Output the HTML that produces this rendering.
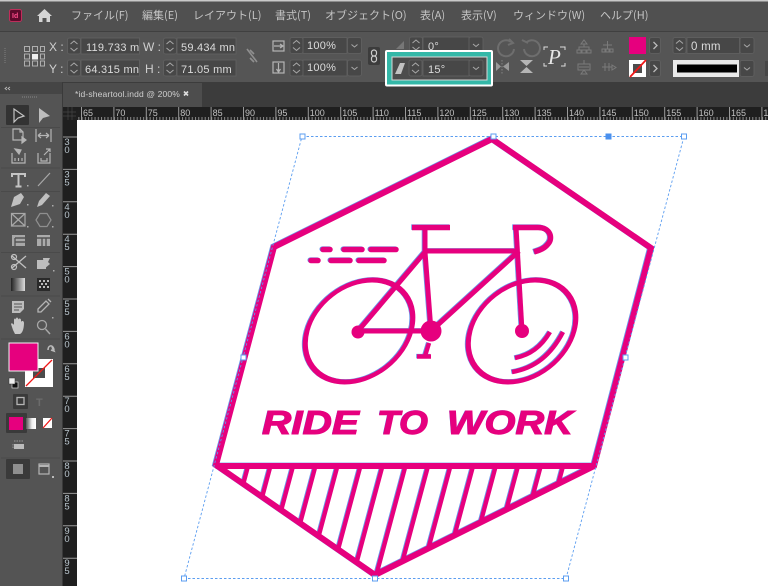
<!DOCTYPE html>
<html><head><meta charset="utf-8"><title>InDesign</title>
<style>html,body{margin:0;padding:0;background:#535353}svg{display:block}
text{font-family:"Liberation Sans","Noto Sans CJK JP",sans-serif}
.m{font-size:11px;fill:#c4c4c4;font-family:"Noto Sans CJK JP","Liberation Sans",sans-serif}
.l{font-size:12px;fill:#cfcfcf}
.v{font-size:11px;fill:#dcdcdc;letter-spacing:.25px}
.r{font-size:9px;fill:#c0c0c0}
.rv{font-size:9.5px;fill:#b8c4cc;text-anchor:middle}
.f{fill:#474747;stroke:#5e5e5e;stroke-width:1}
.ic{fill:none;stroke:#b5b5b5;stroke-width:1.2}
.ch{fill:none;stroke:#a8a8a8;stroke-width:1}
</style></head><body>
<svg width="768" height="586" viewBox="0 0 768 586" xmlns="http://www.w3.org/2000/svg">
<defs>
<pattern id="tk" x="81.6" y="0" width="3.24" height="20" patternUnits="userSpaceOnUse"><rect x="0" y="17" width="1" height="3" fill="#8a8a8a"/></pattern>
<pattern id="tkv" x="0" y="137" width="20" height="3.24" patternUnits="userSpaceOnUse"><rect x="17" y="0" width="3" height="1" fill="#8a8a8a"/></pattern>
<clipPath id="v"><polygon points="216,465 594,465 375,575"/></clipPath>
<linearGradient id="gr"><stop offset="0" stop-color="#222"/><stop offset="1" stop-color="#ddd"/></linearGradient>
<linearGradient id="g2"><stop offset="0" stop-color="#555"/><stop offset=".6" stop-color="#eee"/><stop offset="1" stop-color="#fff"/></linearGradient>
<g id="art" fill="none" stroke-linecap="butt">
 <polygon points="492,139 651,248 594,466 375,575 216,465 274,247" stroke-width="6" stroke-linejoin="miter"/>
 <path d="M216 466H594" stroke-width="6"/>
 <g clip-path="url(#v)" stroke-width="4.4">
  <path d="M248.300 465L217.500 580M270.700 465L239.900 580M293.300 465L262.500 580M315.700 465L284.900 580M337.700 465L306.900 580M360.700 465L329.900 580M382.700 465L351.900 580M405.700 465L374.900 580M428.300 465L397.500 580M450.700 465L419.900 580M473.300 465L442.500 580M496 465L465.200 580M518.300 465L487.500 580M541 465L510.200 580M563.300 465L532.500 580"/>
 </g>
 <g stroke-width="5">
  <ellipse cx="0" cy="0" rx="52" ry="51" transform="matrix(1,0,-.268,1,359,331)"/>
  <ellipse cx="0" cy="0" rx="52" ry="51" transform="matrix(1,0,-.268,1,522,331)"/>
  <path d="M358 331L425 252M358 331H431M425 227L425 252L431 331M423 251H519M519 251L431 331"/>
  <path d="M516 227L522 331"/>
  <path d="M412 227.500H450" stroke-width="5.500"/>
  <path d="M513 227.500H538C551 227.500 553 239 548 244C544 249 540 250 534 252" stroke-width="5.500"/>
  <path d="M429 343L425 356M417 356.500H431" stroke-width="4.500"/>
  <path d="M550 332C541 347 530 355 515 358" stroke-width="4.500"/>
  <path d="M563 332C551 355 535 368 512 372" stroke-width="4.500"/>
 </g>
 <path d="M323 249.500H330M344 249.500H362M371 249.500H396M311 260.500H318M331 260.500H350M359 260.500H384" stroke-width="5.500" stroke-linecap="round"/>
</g>
<g id="hubs"><circle cx="358" cy="332" r="6.500"/><circle cx="522" cy="331" r="7"/><circle cx="431" cy="331" r="10.500"/></g>
<g id="spin"><rect class="f" x="0" y="0" width="13" height="16" rx="2"/><path class="ch" d="M3 6L6.500 3L10 6M3 10L6.500 13L10 10"/></g>
<g id="dd"><rect class="f" x="0" y="0" width="14" height="16" rx="2"/><path class="ch" d="M4 7L7 9.500L10 7"/></g>
</defs>

<!-- chrome -->
<rect width="768" height="586" fill="#535353"/>
<rect width="768" height="1.500" fill="#c9c9c9"/>
<rect y="1.500" width="768" height="30" fill="#505050"/>
<rect y="31" width="768" height="1" fill="#404040"/>
<rect y="32" width="768" height="50" fill="#555555"/>
<rect y="82" width="768" height="25" fill="#3c3c3c"/>
<rect x="0" y="82" width="62" height="12" fill="#454545"/>
<rect x="0" y="94" width="62" height="492" fill="#545454"/>
<rect x="62" y="82" width="1" height="504" fill="#3a3a3a"/>
<rect x="63" y="83" width="139" height="24" fill="#4d4d4d"/>

<!-- menu -->
<rect x="10" y="10" width="11" height="11" rx="1.500" fill="#5e0a2c"/>
<rect x="9.500" y="9.500" width="12" height="12" rx="2" fill="none" stroke="#e0245e" stroke-width=".8"/>
<text x="12" y="18" font-size="7" font-weight="bold" fill="#ff4d8d">Id</text>
<path d="M37 16L44.500 9L52 16H50V22H46.500V18H42.500V22H39V16Z" fill="#d4d4d4"/>
<text class="m" x="71" y="19">ファイル(F)</text>
<text class="m" x="142" y="19">編集(E)</text>
<text class="m" x="193" y="19">レイアウト(L)</text>
<text class="m" x="275" y="19">書式(T)</text>
<text class="m" x="325" y="19">オブジェクト(O)</text>
<text class="m" x="420" y="19">表(A)</text>
<text class="m" x="461" y="19">表示(V)</text>
<text class="m" x="513" y="19">ウィンドウ(W)</text>
<text class="m" x="600" y="19">ヘルプ(H)</text>

<!-- control bar -->
<path d="M5 48V64" stroke="#6a6a6a" stroke-width="2" stroke-dasharray="1 1"/>
<g fill="none" stroke="#b8b8b8" stroke-width=".9">
<rect x="24.500" y="46.500" width="5" height="5"/><rect x="32.500" y="46.500" width="5" height="5"/><rect x="40.500" y="46.500" width="4" height="5"/>
<rect x="24.500" y="54" width="5" height="5"/><rect x="40.500" y="54" width="4" height="5"/>
<rect x="24.500" y="61" width="5" height="5"/><rect x="32.500" y="61" width="5" height="5"/><rect x="40.500" y="61" width="4" height="5"/>
</g>
<rect x="32" y="54" width="6" height="5.500" fill="#eee"/>
<text class="l" x="49" y="51">X :</text><text class="l" x="49" y="73">Y :</text>
<text class="l" x="143" y="51">W :</text><text class="l" x="145" y="73">H :</text>
<use href="#spin" x="67.500" y="38"/><rect class="f" x="81" y="38" width="58.500" height="16"/>
<use href="#spin" x="67.500" y="60"/><rect class="f" x="81" y="60" width="58.500" height="16"/>
<use href="#spin" x="163.500" y="38"/><rect class="f" x="177" y="38" width="59" height="16"/>
<use href="#spin" x="163.500" y="60"/><rect class="f" x="177" y="60" width="59" height="16"/>
<text class="v" x="86" y="51">119.733 m</text><text class="v" x="85" y="73">64.315 mn</text>
<text class="v" x="181" y="51">59.434 mn</text><text class="v" x="181" y="73">71.05 mm</text>
<path d="M247 49L257 62M250 50L254 54M250 58L254 62" fill="none" stroke="#8f8f8f" stroke-width="1.600"/>
<rect class="ic" x="273" y="41" width="11" height="10"/><path class="ic" d="M274 46H282M280 44L283 46L280 48"/>
<rect class="ic" x="273" y="62" width="11" height="11"/><path class="ic" d="M278.500 63V71M276.500 69L278.500 72L280.500 69"/>
<use href="#spin" x="290" y="37.500"/><rect class="f" x="303" y="37.500" width="44" height="16"/><use href="#dd" x="347.500" y="37.500"/>
<use href="#spin" x="290" y="60"/><rect class="f" x="303" y="60" width="44" height="16"/><use href="#dd" x="347.500" y="60"/>
<text class="v" x="307" y="49">100%</text><text class="v" x="307" y="71">100%</text>
<rect x="368" y="47" width="12" height="18" rx="2" fill="#3c3c3c"/><rect x="371.500" y="50" width="5" height="6" rx="2.500" fill="none" stroke="#ccc" stroke-width="1.200"/><rect x="371.500" y="56" width="5" height="6" rx="2.500" fill="none" stroke="#ccc" stroke-width="1.200"/>

<path d="M396 49L404 41V49Z" fill="#777"/>
<use href="#spin" x="409.500" y="37"/><rect class="f" x="423" y="37" width="46" height="16"/><use href="#dd" x="469" y="37"/>
<text class="v" x="428" y="50">0°</text>

<path style="stroke:#6e6e6e;stroke-width:2;fill:none" d="M511 42A8 8 0 1 0 514 49M509 39L513 43L508 45"/>
<path style="stroke:#6e6e6e;stroke-width:2;fill:none" d="M527 42A8 8 0 1 1 524 49M522 40L528 43"/>
<path d="M496 62L501 66.500L496 71ZM509 62V71L503 66.500Z" fill="#999"/><path d="M502 60V74" stroke="#999" stroke-width=".7" stroke-dasharray="1.500 1.500"/>
<path d="M520 60H533L526.500 66ZM520 73H533L526.500 67Z" fill="#b5b5b5"/>

<text x="548" y="64" font-size="21" font-style="italic" style="font-family:'Liberation Serif',serif" fill="#e6e6e6">P</text>
<path d="M544 50V47H548M560 47H565V50M544 63V66H547M561 66H565V63" fill="none" stroke="#ddd" stroke-width="1"/>
<g fill="none" stroke="#7a7a7a" stroke-width="1">
<path d="M584 40L587 44H581ZM584 44V47M579 50V47H589V50M577 50H581V53H577ZM582 50H586V53H582ZM587 50H591V53H587Z"/>
<path d="M603 45H612M607.500 41V49M602 49H605V52H602ZM606 49H609V52H606ZM610 49H613V52H610Z"/>
<path d="M584 60V64M579 67H589M578 64H590V70H578ZM584 70L587 74H581Z"/>
<path d="M602 67H612M605 63V71M609 63V71M612 65L616 67.500L612 70Z"/>
</g>
<rect x="629" y="37" width="17" height="17" fill="#e6007e"/>
<rect class="f" x="649.500" y="37.500" width="11" height="16" rx="2"/><path d="M653.500 42L657 45.500L653.500 49" fill="none" stroke="#bbb" stroke-width="1.300"/>
<rect x="629" y="60" width="17" height="17" fill="#fff"/><rect x="633" y="64" width="9" height="9" fill="#4d4d4d"/>
<path d="M630 77L646 60" stroke="#f01818" stroke-width="1.800"/>
<rect class="f" x="649.500" y="60.500" width="11" height="16" rx="2"/><path d="M653.500 65L657 68.500L653.500 72" fill="none" stroke="#bbb" stroke-width="1.300"/>
<use href="#spin" x="673" y="37.500"/><rect class="f" x="687" y="37.500" width="52.500" height="16"/><use href="#dd" x="740" y="37.500"/>
<text class="v" x="691" y="50" style="font-size:11.500px">0 mm</text>
<rect x="673" y="60" width="66" height="17" fill="#e9e9e9"/><rect x="677" y="64.500" width="60" height="8" fill="#000"/>
<use href="#dd" x="740" y="60.500"/>
<rect x="765" y="61" width="3" height="15" fill="#474747"/>

<!-- highlight -->
<rect x="385" y="50" width="108" height="36.500" rx="2" fill="#fff"/>
<rect x="387" y="52" width="104" height="32.500" fill="#34b8a8"/>
<rect x="391.500" y="56.500" width="96" height="24" fill="#d8d8d8"/>
<rect x="392.500" y="57.500" width="94" height="22" fill="#4c4c4c"/>
<path d="M395 74L400 63H405L401 74Z" fill="#c2c2c2"/>
<use href="#spin" x="409" y="60"/>
<rect class="f" x="423" y="60" width="46" height="16"/><use href="#dd" x="469" y="60"/>
<text class="v" x="428" y="73">15°</text>

<!-- tab -->
<path d="M7 87L5 88.500L7 90M10 87L8 88.500L10 90" fill="none" stroke="#bbb" stroke-width=".8"/>
<text x="75" y="97" font-size="8.500" fill="#cfcfcf" letter-spacing=".15">*id-sheartool.indd @ 200%</text>
<path d="M184 91.500L188 95.500M188 91.500L184 95.500" stroke="#dedede" stroke-width="1.600"/>

<!-- rulers -->
<rect x="63" y="107" width="705" height="13" fill="#1f1f1f"/>
<rect x="63" y="107" width="705" height="13" fill="url(#tk)"/>
<rect x="63" y="107" width="14" height="479" fill="#1f1f1f"/>
<rect x="63" y="120" width="14" height="466" fill="url(#tkv)"/>
<path d="M63 112H76M63 116H76M68 107V120M72 107V120" stroke="#454545" stroke-width=".7"/>
<rect x="77" y="120" width="691" height="466" fill="#fff"/>
<g stroke="#9a9a9a" stroke-width="1" fill="none"><path d="M81.500 107V120M113.900 107V120M146.300 107V120M178.700 107V120M211.100 107V120M243.500 107V120M275.900 107V120M308.300 107V120M340.700 107V120M373.100 107V120M405.500 107V120M437.900 107V120M470.300 107V120M502.700 107V120M535.100 107V120M567.500 107V120M599.900 107V120M632.300 107V120M664.700 107V120M697.100 107V120M729.500 107V120M761.900 107V120"/>
<path d="M63 137H77M63 169.400H77M63 201.800H77M63 234.200H77M63 266.600H77M63 299H77M63 331.400H77M63 363.800H77M63 396.200H77M63 428.600H77M63 461H77M63 493.400H77M63 525.800H77M63 558.200H77"/></g>
<g>
<text class="r" x="83" y="116">65</text><text class="r" x="115.400" y="116">70</text><text class="r" x="147.800" y="116">75</text><text class="r" x="180.200" y="116">80</text><text class="r" x="212.600" y="116">85</text><text class="r" x="245" y="116">90</text><text class="r" x="277.400" y="116">95</text><text class="r" x="309.800" y="116">100</text><text class="r" x="342.200" y="116">105</text><text class="r" x="374.600" y="116">110</text><text class="r" x="407" y="116">115</text><text class="r" x="439.400" y="116">120</text><text class="r" x="471.800" y="116">125</text><text class="r" x="504.200" y="116">130</text><text class="r" x="536.600" y="116">135</text><text class="r" x="569" y="116">140</text><text class="r" x="601.400" y="116">145</text><text class="r" x="633.800" y="116">150</text><text class="r" x="666.200" y="116">155</text><text class="r" x="698.600" y="116">160</text><text class="r" x="731" y="116">165</text><text class="r" x="763.400" y="116">170</text>
</g>
<g>
<text class="rv" x="67" y="145">3</text><text class="rv" x="67" y="153">0</text>
<text class="rv" x="67" y="177.400">3</text><text class="rv" x="67" y="185.400">5</text>
<text class="rv" x="67" y="209.800">4</text><text class="rv" x="67" y="217.800">0</text>
<text class="rv" x="67" y="242.200">4</text><text class="rv" x="67" y="250.200">5</text>
<text class="rv" x="67" y="274.600">5</text><text class="rv" x="67" y="282.600">0</text>
<text class="rv" x="67" y="307">5</text><text class="rv" x="67" y="315">5</text>
<text class="rv" x="67" y="339.400">6</text><text class="rv" x="67" y="347.400">0</text>
<text class="rv" x="67" y="371.800">6</text><text class="rv" x="67" y="379.800">5</text>
<text class="rv" x="67" y="404.200">7</text><text class="rv" x="67" y="412.200">0</text>
<text class="rv" x="67" y="436.600">7</text><text class="rv" x="67" y="444.600">5</text>
<text class="rv" x="67" y="469">8</text><text class="rv" x="67" y="477">0</text>
<text class="rv" x="67" y="501.400">8</text><text class="rv" x="67" y="509.400">5</text>
<text class="rv" x="67" y="533.800">9</text><text class="rv" x="67" y="541.800">0</text>
<text class="rv" x="67" y="566.200">9</text><text class="rv" x="67" y="574.200">5</text>
</g>

<!-- tools -->
<path d="M22 97H37" stroke="#777" stroke-width="1.500" stroke-dasharray="1 1"/>
<rect x="6" y="105" width="23" height="20" rx="1" fill="#333"/>
<path d="M14 109V122L18 118L24 116Z" fill="none" stroke="#c4c4c4" stroke-width="1.200"/>
<path d="M39 108V123L43 118L50 116Z" fill="#bdbdbd"/>
<g class="ic">
<path d="M13 129H20L23 132V140H13ZM20 129V132H23"/><path d="M22 137L26 140L22 143V137Z" fill="#b5b5b5"/>
<path d="M36 129V142M51 129V142M38 135.500H49M38 135.500L41 133M38 135.500L41 138M49 135.500L46 133M49 135.500L46 138"/>
<path d="M12 153V163H25V153M15 158V161M18.500 158V161M22 158V161"/><path d="M15 149L19 154L21 150L15 149Z" fill="#b5b5b5"/>
<path d="M38 153V163H50V153M41 158V161H47V158"/><path d="M44 155L50 149M46 149H50V152"/>
<path d="M38 186L50 173" stroke="#a8a8a8"/>
<path d="M11.500 213.500H25V226H11.500ZM11.500 213.500L25 226M25 213.500L11.500 226" stroke="#a8a8a8"/>
<path d="M36 220L40 213.500H47L51 220L47 226.500H40Z" stroke="#8f8f8f"/>
</g>
<path d="M12 177V174H25V177M18.500 174V186M15.500 186.500H21.500" fill="none" stroke="#c4c4c4" stroke-width="2"/>
<path d="M11 207L14 197L21 193L24 197L20 204Z" fill="#c0c0c0"/>
<path d="M37 207L39 201L46 193L50 196L42 205Z" fill="#c0c0c0"/>
<g fill="#ababab">
<path d="M12 235H25V246H12Z" fill="#a8a8a8"/><path d="M37 235H50V246H37Z"/>
<rect x="27" y="204" width="1.500" height="1.500"/><rect x="52" y="205" width="1.500" height="1.500"/><rect x="27" y="226" width="1.500" height="1.500"/><rect x="52" y="226" width="1.500" height="1.500"/><rect x="27" y="185" width="1.500" height="1.500"/><rect x="53" y="270" width="1.500" height="1.500"/><rect x="52" y="317" width="1.500" height="1.500"/>
</g>
<path d="M15 238H25M15 242H25M15 238V246" stroke="#545454" stroke-width="1.400" fill="none"/>
<path d="M42 238V246M46 238V246M37 238H50" stroke="#545454" stroke-width="1.400" fill="none"/>
<path d="M12 256L26 268M12 268L26 256" stroke="#c0c0c0" stroke-width="1.300"/><circle cx="14" cy="257" r="2.500" fill="none" stroke="#c0c0c0" stroke-width="1.200"/><circle cx="14" cy="267" r="2.500" fill="none" stroke="#c0c0c0" stroke-width="1.200"/>
<path d="M37 260H46V269H37ZM43 258L50 258L48 262L50 264L44 269Z" fill="#bdbdbd"/>
<rect x="11" y="278" width="14" height="13" fill="url(#gr)"/>
<rect x="37" y="278" width="13" height="13" fill="#2a2a2a"/>
<path d="M39 280h2v2h-2zM43 280h2v2h-2zM47 280h2v2h-2zM41 283h2v2h-2zM45 283h2v2h-2zM39 286h2v2h-2zM43 286h2v2h-2zM47 286h2v2h-2z" fill="#bbb"/>
<path d="M12 301H24V309L20 313H12Z" fill="#bdbdbd"/><path d="M14 304H22M14 307H22M14 310H19" stroke="#545454" stroke-width="1"/>
<path d="M38 312L38 309L46 301L49 304L41 312Z M48 299L51 302" fill="none" stroke="#b5b5b5" stroke-width="1.300"/>
<path d="M13 330L11 324C11 323 13 323 14 325V320C14 318 16 318 16 320V319C16 317 18 317 18 319V320C18 318 21 318 21 320V322C22 320 24 321 24 323C24 327 23 333 20 334H15Z" fill="#c8c8c8"/>
<circle cx="42" cy="325" r="4.500" fill="none" stroke="#a8a8a8" stroke-width="1.300"/><path d="M45.500 329L50 334" stroke="#a8a8a8" stroke-width="1.500"/>

<g stroke="#4a4a4a" stroke-width="1"><path d="M1 127.500H60M1 168H60M1 191.500H60M1 252.500H60M1 296H60M1 339H60"/></g>

<!-- fill/stroke -->
<path d="M48 350C48 345 53 344 54 350M52 347L54 351L51 350" fill="none" stroke="#bbb" stroke-width="1.600"/>
<rect x="25" y="359" width="28" height="28" fill="#fff"/><rect x="33" y="368" width="12" height="10" fill="#4b4b4b"/>
<path d="M26 386L52 360" stroke="#f01818" stroke-width="1.300"/>
<rect x="9" y="343" width="29" height="28" fill="#e6007e" stroke="#f2f2f2" stroke-width="1"/>
<rect x="12" y="382" width="6" height="6" fill="#111" stroke="#ddd" stroke-width=".7"/><rect x="9" y="378" width="6" height="6" fill="#eee" stroke="#333" stroke-width=".5"/>
<rect x="13" y="394" width="15" height="15" rx="1" fill="#3a3a3a"/>
<rect x="17" y="397.500" width="7" height="7" fill="none" stroke="#b5b5b5" stroke-width="1.300"/>
<text x="36" y="406" font-size="11" font-weight="bold" fill="#6b6b6b">T</text>
<rect x="6" y="413" width="21" height="20" rx="1" fill="#3a3a3a"/>
<rect x="9" y="417" width="14" height="13" fill="#e6007e"/>
<rect x="26" y="418" width="10" height="11" fill="url(#g2)"/>
<rect x="43" y="418" width="9" height="10" fill="#fff"/><path d="M43 428L52 418" stroke="#f01818" stroke-width="1.300"/>
<rect x="14" y="444" width="10" height="5" fill="#bbb"/><path d="M14 441h10M13 444v5" stroke="#999" stroke-width="1" stroke-dasharray="1.500 1"/>
<path d="M1 458H60" stroke="#4a4a4a"/>
<rect x="6" y="459" width="24" height="20" rx="1" fill="#3a3a3a"/>
<rect x="13" y="464" width="10" height="10" fill="#8f8f8f"/>
<rect x="39" y="464" width="10" height="10" fill="none" stroke="#b5b5b5" stroke-width="1.200"/><path d="M39 466H49" stroke="#b5b5b5" stroke-width="2"/>
<rect x="52" y="476" width="2" height="2" fill="#bbb"/>

<!-- artwork -->
<g transform="translate(-.8 -.4)" stroke="#4f86e6" fill="#4f86e6" opacity=".85"><use href="#art"/></g>
<g stroke="#e6007e" fill="#e6007e"><use href="#art"/></g>
<g fill="#e6007e"><use href="#hubs"/></g>
<g font-size="33" font-weight="bold" font-style="italic">
<text x="261.300" y="433.600" fill="#4f86e6" textLength="97" lengthAdjust="spacingAndGlyphs">RIDE</text>
<text x="376.300" y="433.600" fill="#4f86e6" textLength="51" lengthAdjust="spacingAndGlyphs">TO</text>
<text x="446.300" y="433.600" fill="#4f86e6" textLength="126" lengthAdjust="spacingAndGlyphs">WORK</text>
<text x="262" y="434" fill="#e6007e" stroke="#e6007e" stroke-width="1" textLength="97" lengthAdjust="spacingAndGlyphs">RIDE</text>
<text x="377" y="434" fill="#e6007e" stroke="#e6007e" stroke-width="1" textLength="51" lengthAdjust="spacingAndGlyphs">TO</text>
<text x="447" y="434" fill="#e6007e" stroke="#e6007e" stroke-width="1" textLength="126" lengthAdjust="spacingAndGlyphs">WORK</text>
</g>

<!-- selection -->
<polygon points="302,136.500 684,136.500 566,578.500 184,578.500" fill="none" stroke="#5b9df0" stroke-width=".9" stroke-dasharray="2.500 2"/>
<g fill="#fff" stroke="#5b9df0" stroke-width="1">
<rect x="300" y="134" width="5" height="5"/><rect x="491" y="134" width="5" height="5"/><rect x="681.500" y="134" width="5" height="5"/>
<rect x="241" y="355" width="5" height="5"/><rect x="623" y="355" width="5" height="5"/>
<rect x="181.500" y="576" width="5" height="5"/><rect x="372.500" y="576" width="5" height="5"/><rect x="563.500" y="576" width="5" height="5"/>
</g>
<rect x="605.500" y="133.500" width="6" height="6" fill="#4a90ee"/>
</svg>
</body></html>
